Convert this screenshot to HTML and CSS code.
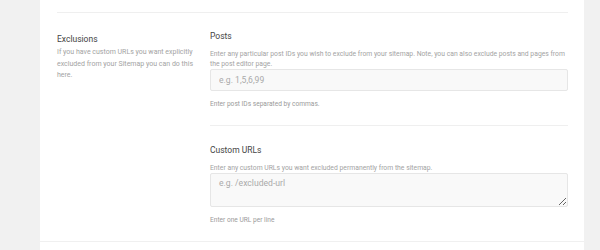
FILE: index.html
```html
<!DOCTYPE html>
<html>
<head>
    <title>Sitemap Settings</title>
    <link rel="stylesheet" href="styles.css">
</head>
<body>
<div class="panel">
    <div class="section-top"></div>

    <div class="setting">
        <div class="setting-info">
            <h3>Exclusions</h3>
            <p>If you have custom URLs you want explicitly excluded from your Sitemap you can do this here.</p>
        </div>

        <div class="setting-fields">
            <div class="field">
                <h4>Posts</h4>
                <p class="field-desc">Enter any particular post IDs you wish to exclude from your sitemap. Note, you can also exclude posts and pages from the post editor page.</p>
                <input type="text" class="text-input" placeholder="e.g. 1,5,6,99">
                <p class="field-help">Enter post IDs separated by commas.</p>
            </div>

            <div class="field">
                <h4>Custom URLs</h4>
                <p class="field-desc">Enter any custom URLs you want excluded permanently from the sitemap.</p>
                <textarea class="text-area" placeholder="e.g. /excluded-url"></textarea>
                <p class="field-help">Enter one URL per line</p>
            </div>
        </div>
    </div>

    <div class="section-bottom"></div>
</div>
</body>
</html>
```

FILE: styles.css
```css
/* Settings page */
body {
    margin: 0;
    background: #f1f1f1;
    font-family: Roboto, "Liberation Sans", sans-serif;
}

.panel {
    margin-left: 40px;
    width: 544px;
    height: 250px;
    background: #fff;
}

.section-top {
    height: 12px;
    margin: 0 16px 0 17px;
    border-bottom: 1px solid #efefef;
}

.setting {
    display: flex;
    padding: 18px 16px 16px 17px;
}

/* left column */
.setting-info {
    width: 140px;
    padding-top: 3px;
    margin-right: 13px;
}

.setting-info h3 {
    margin: 0;
    font-size: 8.5px;
    line-height: 10px;
    font-weight: 400;
    color: #444;
}

.setting-info p {
    margin: 3px 0 0;
    font-size: 7px;
    line-height: 11.5px;
    color: #a3a3a3;
}

/* right column */
.setting-fields {
    flex: 1;
}

.field {
    padding-bottom: 16px;
    border-bottom: 1px solid #efefef;
}

.field + .field {
    padding-top: 19px;
    padding-bottom: 0;
    border-bottom: none;
}

.field h4 {
    margin: 0;
    font-size: 8.5px;
    line-height: 10px;
    font-weight: 400;
    color: #444;
}

.field-desc {
    margin: 8px 0 0;
    font-size: 6.8px;
    line-height: 10px;
    color: #a3a3a3;
}

.field-help {
    margin: 8px 0 0;
    font-size: 6.6px;
    line-height: 10px;
    color: #9a9a9a;
}

.text-input,
.text-area {
    display: block;
    box-sizing: border-box;
    width: 100%;
    margin: 0;
    padding: 0 8px;
    border: 1px solid #e6e6e6;
    border-radius: 2px;
    background: #f9f9f9;
    font-family: Roboto, "Liberation Sans", sans-serif;
    font-size: 8.6px;
    color: #555;
    outline: none;
}

.text-input {
    height: 22px;
}

.text-area {
    height: 34px;
    padding-top: 4px;
    resize: vertical;
}

.text-input::placeholder,
.text-area::placeholder {
    color: #aaa;
}

.section-bottom {
    border-top: 1px solid #f0f0f0;
}
```
